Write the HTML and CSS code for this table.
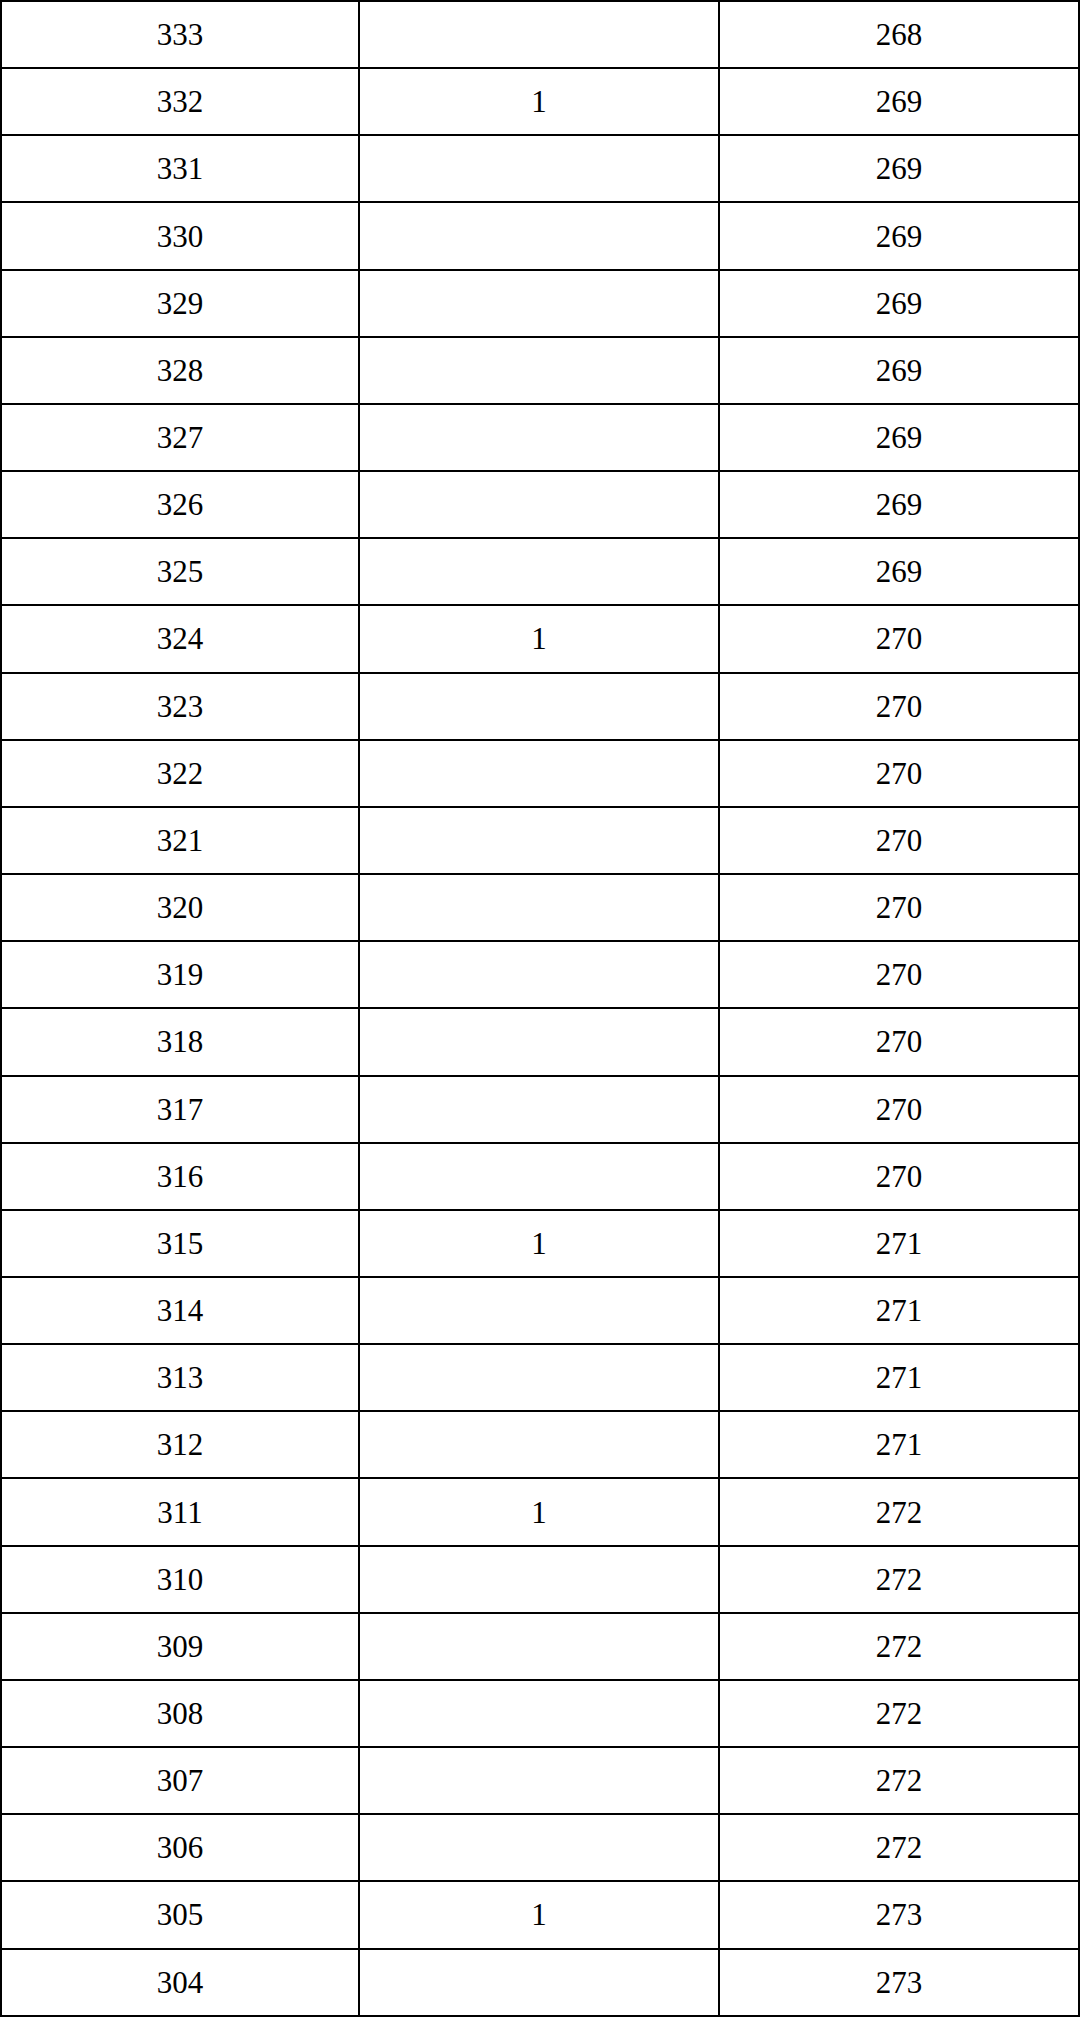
FILE: index.html
```html
<!DOCTYPE html>
<html lang="zh">
<head>
<meta charset="utf-8">
<title>Table</title>
<link rel="stylesheet" href="styles.css">
</head>
<body>
<div class="grid">
<div class="c">333</div><div class="c"></div><div class="c">268</div>
<div class="c">332</div><div class="c">1</div><div class="c">269</div>
<div class="c">331</div><div class="c"></div><div class="c">269</div>
<div class="c">330</div><div class="c"></div><div class="c">269</div>
<div class="c">329</div><div class="c"></div><div class="c">269</div>
<div class="c">328</div><div class="c"></div><div class="c">269</div>
<div class="c">327</div><div class="c"></div><div class="c">269</div>
<div class="c">326</div><div class="c"></div><div class="c">269</div>
<div class="c">325</div><div class="c"></div><div class="c">269</div>
<div class="c">324</div><div class="c">1</div><div class="c">270</div>
<div class="c">323</div><div class="c"></div><div class="c">270</div>
<div class="c">322</div><div class="c"></div><div class="c">270</div>
<div class="c">321</div><div class="c"></div><div class="c">270</div>
<div class="c">320</div><div class="c"></div><div class="c">270</div>
<div class="c">319</div><div class="c"></div><div class="c">270</div>
<div class="c">318</div><div class="c"></div><div class="c">270</div>
<div class="c">317</div><div class="c"></div><div class="c">270</div>
<div class="c">316</div><div class="c"></div><div class="c">270</div>
<div class="c">315</div><div class="c">1</div><div class="c">271</div>
<div class="c">314</div><div class="c"></div><div class="c">271</div>
<div class="c">313</div><div class="c"></div><div class="c">271</div>
<div class="c">312</div><div class="c"></div><div class="c">271</div>
<div class="c">311</div><div class="c">1</div><div class="c">272</div>
<div class="c">310</div><div class="c"></div><div class="c">272</div>
<div class="c">309</div><div class="c"></div><div class="c">272</div>
<div class="c">308</div><div class="c"></div><div class="c">272</div>
<div class="c">307</div><div class="c"></div><div class="c">272</div>
<div class="c">306</div><div class="c"></div><div class="c">272</div>
<div class="c">305</div><div class="c">1</div><div class="c">273</div>
<div class="c">304</div><div class="c"></div><div class="c">273</div>
</div>
</body>
</html>
```
FILE: styles.css
```css
html, body {
  margin: 0;
  padding: 0;
  background: #fff;
}
.grid {
  display: grid;
  grid-template-columns: 358px 360px 360px;
  grid-auto-rows: 67.167px;
  border-top: 2px solid #000;
  border-left: 2px solid #000;
  width: 1080px;
  box-sizing: border-box;
}
.c {
  box-sizing: border-box;
  border-right: 2px solid #000;
  border-bottom: 2px solid #000;
  display: flex;
  align-items: center;
  justify-content: center;
  font-family: "Liberation Serif", "Times New Roman", serif;
  font-size: 31px;
  color: #000;
  padding-top: 1px;
}
```
